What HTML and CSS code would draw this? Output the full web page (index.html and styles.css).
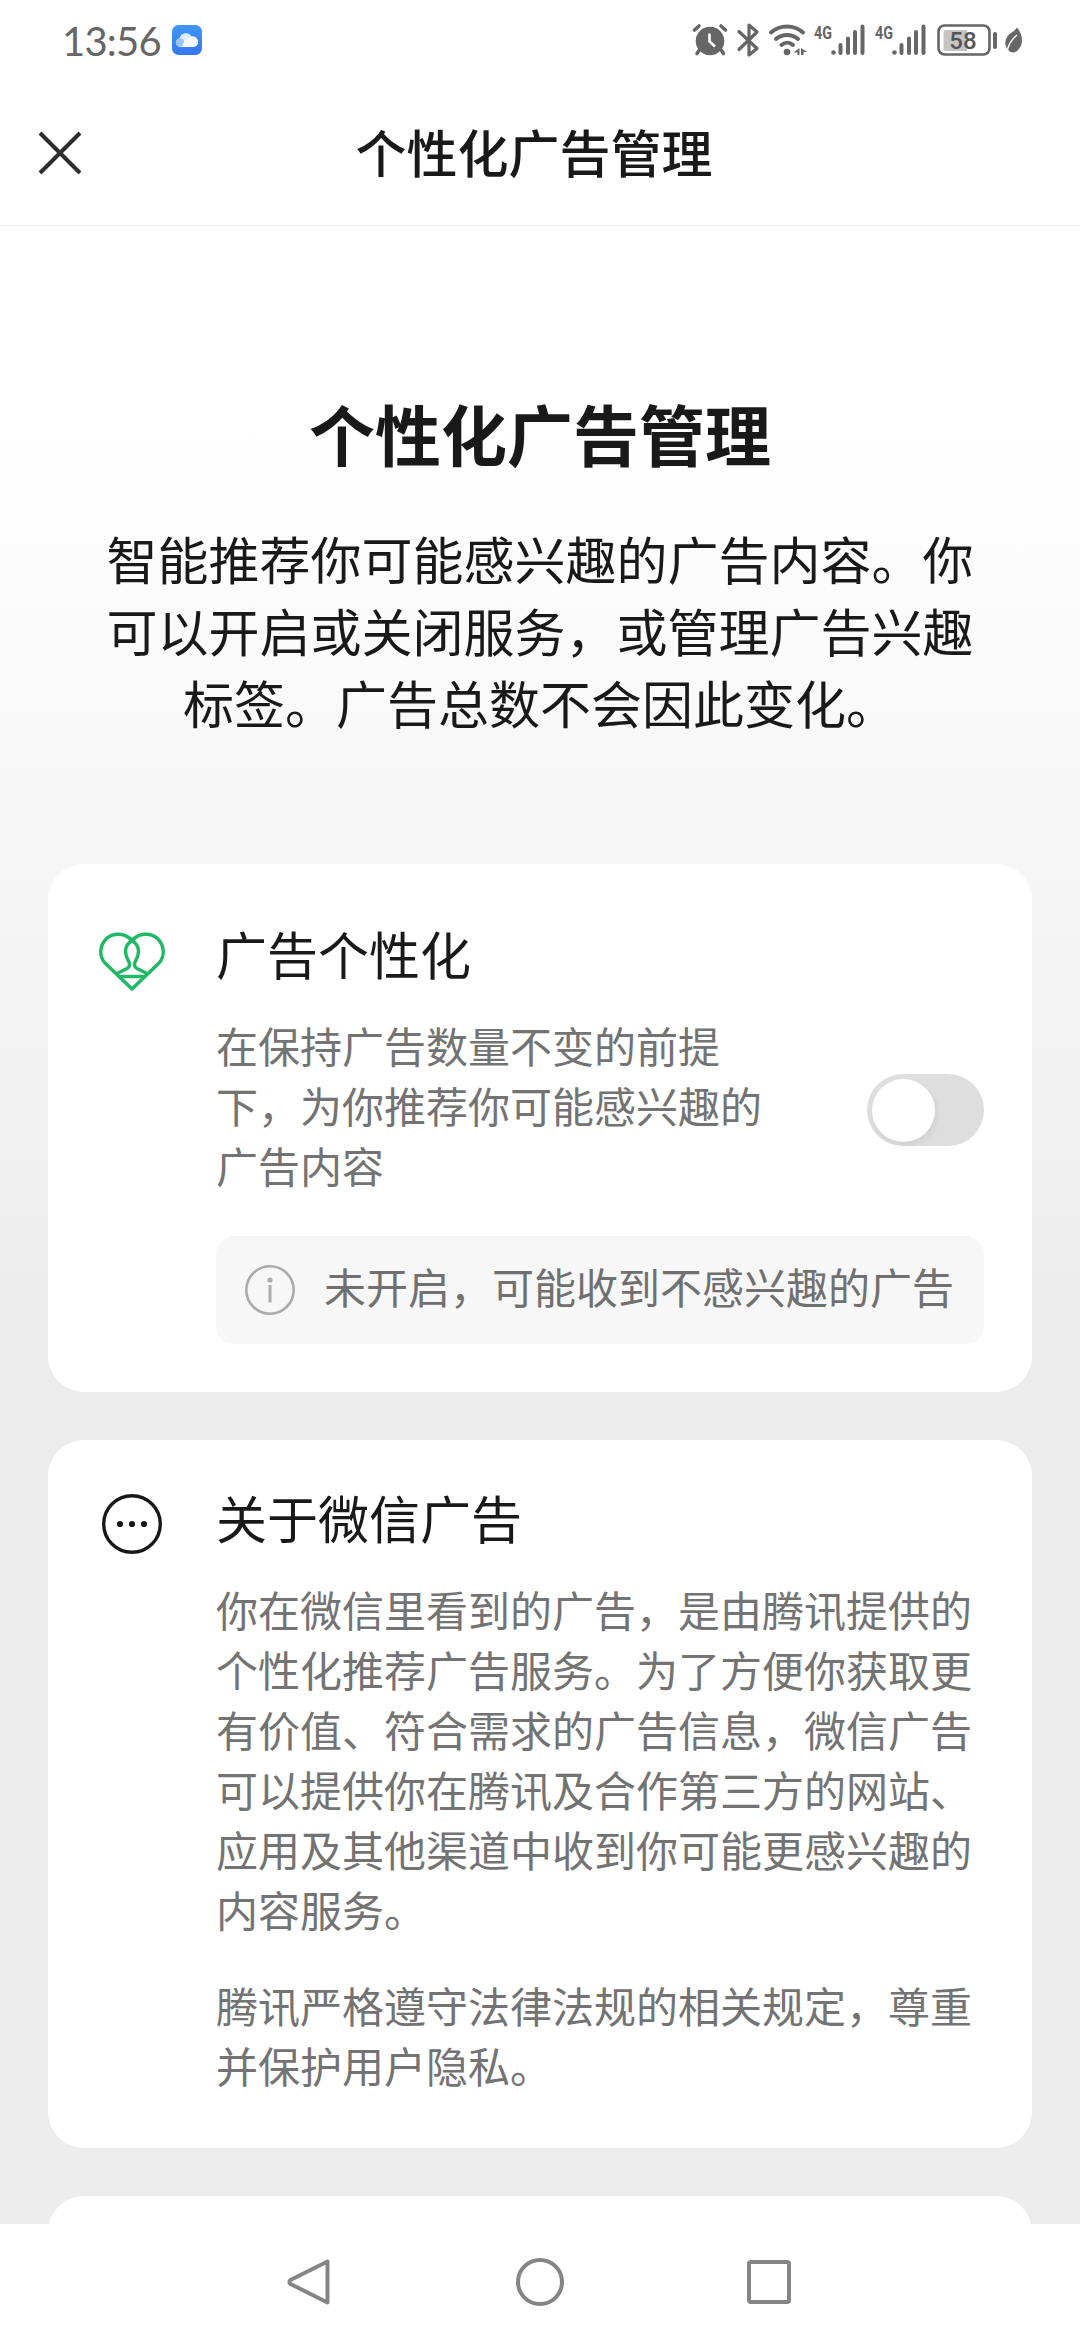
FILE: index.html
```html
<!DOCTYPE html>
<html lang="zh-CN">
<head>
<meta charset="utf-8">
<title>个性化广告管理</title>
<link rel="stylesheet" href="styles.css">
</head>
<body>
<div class="screen">
  <div class="status">
    <span class="time">13:56</span>
    <svg class="cloud" width="30" height="30" viewBox="0 0 30 30">
      <defs>
        <linearGradient id="sky" x1="0" y1="0" x2="0" y2="1"><stop offset="0" stop-color="#3f97f6"/><stop offset="1" stop-color="#3478ee"/></linearGradient>
        <linearGradient id="puff" x1="0" y1="0" x2="1" y2="1"><stop offset="0" stop-color="#cfe3fd"/><stop offset="1" stop-color="#fff"/></linearGradient>
      </defs>
      <rect width="30" height="30" rx="6.5" fill="url(#sky)"/>
      <path d="M8.500 22a4.500 4.500 0 0 1-1-8.800A6.500 6.500 0 0 1 19.500 11.500a5.500 5.500 0 0 1 6.500 5.500a5 5 0 0 1-5 5z" fill="url(#puff)"/>
      <circle cx="8" cy="17.500" r="4.300" fill="#9cc5fa"/>
      <path d="M10 22C11 17 14 13 19.500 11.500a5.500 5.500 0 0 1 6.500 5.500a5 5 0 0 1-5 5z" fill="#f5f9ff"/>
    </svg>
    <svg class="indicators" width="344" height="40" viewBox="690 20 344 40" fill="#666" stroke="none">
      <circle cx="710" cy="41" r="14.300"/>
      <path d="M694.500 30l4.500-4M721 26l4.500 4M699 50.500l-2 3M721.500 50.500l2 3" stroke="#666" stroke-width="3.600" stroke-linecap="round"/>
      <path d="M709.500 33.500v8l5.500 5" stroke="#fff" stroke-width="2.600" fill="none"/>
      <path d="M739 31.500l18 17l-8 6.500V25l8 7l-18 17.500" stroke="#666" stroke-width="3.200" fill="none" stroke-linejoin="round" stroke-linecap="round"/>
      <path d="M771 32.500c9-8 23-8 32 0M776 39c6-5.500 16-5.500 22 0M781.500 45c3.500-3 8-3 11.500 0" stroke="#666" stroke-width="4" fill="none" stroke-linecap="round"/>
      <circle cx="787" cy="52" r="3.300"/>
      <path d="M799.500 48v7h-2v-2.500h-4zM801 48l6 4h-3.500v3H801z"/>
      <g id="signal">
        <circle cx="833.500" cy="52.500" r="2.300"/>
        <path d="M840.500 45v8M848 38.500V53M855 32v21M862.500 26.500V53" stroke="#666" stroke-width="4" stroke-linecap="round"/>
        <text x="814" y="38.500" class="network" textLength="18" lengthAdjust="spacingAndGlyphs">4G</text>
      </g>
      <use href="#signal" x="61"/>
      <rect x="938.500" y="25.500" width="51" height="29" rx="6" fill="none" stroke="#666" stroke-width="2.600"/>
      <path d="M946 30h21v21h-21a2.500 2.500 0 0 1-2.500-2.500v-16a2.500 2.500 0 0 1 2.500-2.500z" fill="#c4c4c4"/>
      <text x="963" y="49" class="charge" text-anchor="middle">58</text>
      <path d="M995 34v13" stroke="#666" stroke-width="4" stroke-linecap="round"/>
      <path d="M1017 27.500c5 6 7.500 15 1.500 22c-2 2.500-4.500 3.500-8 2.500c-6-4-7-11-2-17c3-3 6.500-4 8.500-7.500z"/>
      <path d="M1017 35c-5 4-9 9-10 17.500" fill="none" stroke="#fff" stroke-width="1.500"/>
    </svg>
  </div>
  <header class="navbar">
    <svg class="close" width="48" height="48" viewBox="0 0 48 48"><path d="M4 4l40 40M44 4L4 44" stroke="#2e2e2e" stroke-width="4" fill="none"/></svg>
    <div class="navtitle">个性化广告管理</div>
  </header>
  <main class="page">
    <h1 class="headline">个性化广告管理</h1>
    <p class="intro">智能推荐你可能感兴趣的广告内容。你可以开启或关闭服务，或管理广告兴趣标签。广告总数不会因此变化。</p>
    <section class="card card-personal">
      <svg class="icon" width="72" height="72" viewBox="0 0 72 72" fill="none" stroke="#1fb864" stroke-width="3.400" stroke-linejoin="round">
        <path d="M36 14.500C29.500 7 17.500 6 10.500 12.500C3 20 3 31 9.500 37.500L36 63L62.500 37.500C69 31 69 20 61.500 12.500C54.500 6 42.500 7 36 14.500z"/>
        <path d="M21 47.500L31 42.500C33.500 41 34 38.500 33 36C32 33.500 29.500 31.500 29.500 25C29.500 19.500 32 17 36 14.500C40 17 42.500 19.500 42.500 25C42.500 31.500 40 33.500 39 36C38 38.500 38.500 41 41 42.500L51 47.500"/>
        <path d="M23.500 50.500h25"/>
      </svg>
      <div class="content">
        <h2 class="title">广告个性化</h2>
        <div class="setting">
          <p class="text">在保持广告数量不变的前提下，为你推荐你可能感兴趣的广告内容</p>
          <div class="switch"><div class="knob"></div></div>
        </div>
        <div class="notice">
          <svg width="60" height="60" viewBox="0 0 60 60"><circle cx="30" cy="30" r="23.700" fill="none" stroke="#ababab" stroke-width="2.600"/><circle cx="30" cy="20" r="2.600" fill="#ababab"/><path d="M30 25v17.500" stroke="#ababab" stroke-width="3"/></svg>
          <span>未开启，可能收到不感兴趣的广告</span>
        </div>
      </div>
    </section>
    <section class="card card-about">
      <svg class="icon" width="72" height="72" viewBox="0 0 72 72"><circle cx="36" cy="36" r="28.300" fill="none" stroke="#191919" stroke-width="3.400"/><g fill="#191919"><circle cx="24" cy="36" r="3.100"/><circle cx="36" cy="36" r="3.100"/><circle cx="48" cy="36" r="3.100"/></g></svg>
      <div class="content">
        <h2 class="title">关于微信广告</h2>
        <p class="text">你在微信里看到的广告，是由腾讯提供的个性化推荐广告服务。为了方便你获取更有价值、符合需求的广告信息，微信广告可以提供你在腾讯及合作第三方的网站、应用及其他渠道中收到你可能更感兴趣的内容服务。</p>
        <p class="text second">腾讯严格遵守法律法规的相关规定，尊重并保护用户隐私。</p>
      </div>
    </section>
    <section class="card card-next"></section>
  </main>
  <nav class="system">
    <svg width="1080" height="116" viewBox="0 0 1080 116" fill="none" stroke="#858585" stroke-width="4">
      <path d="M327.500 37.500v41L290.500 60q-2-2 0-4z" stroke-linejoin="round"/>
      <circle cx="540" cy="58" r="22"/>
      <rect x="749" y="38" width="40" height="40" rx="2"/>
    </svg>
  </nav>
</div>
</body>
</html>
```
FILE: styles.css
```css
* { box-sizing: border-box; margin: 0; padding: 0; }

body {
  font-family: "Noto Sans CJK SC", sans-serif;
  color: #191919;
  background: #fff;
}

.screen {
  width: 1080px;
  height: 2340px;
  overflow: hidden;
  display: flex;
  flex-direction: column;
}

.status {
  height: 80px;
  padding: 0 46px 0 62px;
  display: flex;
  align-items: center;
}

.time {
  width: 110px;
  padding-top: 2px;
  font: 400 40px/48px Lato, sans-serif;
  letter-spacing: -.8px;
  color: #666;
}

.indicators { margin-left: auto; }
.network { font: 700 19px Roboto, sans-serif; }
.charge { font: 500 24px Roboto, sans-serif; fill: #555; }

.navbar {
  height: 146px;
  border-bottom: 1px solid #f2f2f2;
  padding: 0 36px;
  display: grid;
  grid-template-columns: 48px 1fr 60px;
  align-items: center;
}

.navtitle {
  padding-bottom: 4px;
  text-align: center;
  font-size: 51px;
  line-height: 72px;
  font-weight: 500;
}

.page {
  height: 1998px;
  overflow: hidden;
  padding: 160px 48px 0;
  display: flex;
  flex-direction: column;
  background: linear-gradient(#fff 190px, #ededed 1080px);
}

.headline {
  text-align: center;
  font-size: 66px;
  line-height: 92px;
  font-weight: 700;
}

.intro {
  padding: 0 48px;
  margin: 44px 0 126px;
  font-size: 51px;
  line-height: 72px;
  text-align: center;
}

.card {
  flex: none;
  margin-bottom: 48px;
  padding: 0 48px;
  border-radius: 36px;
  background: #fff;
  display: grid;
  grid-template-columns: 72px 768px;
  column-gap: 48px;
  align-items: start;
}

.card-personal { height: 528px; padding-top: 53px; }
.card-about { height: 708px; padding-top: 41px; }
.card-next { height: 300px; }
.card-personal .icon { margin-top: 9px; }
.card-about .icon { margin-top: 7px; }

.title {
  font-size: 51px;
  line-height: 72px;
  font-weight: 400;
}

.text {
  margin-top: 26px;
  font-size: 42px;
  line-height: 60px;
  color: #737373;
}

.second { margin-top: 36px; }

.setting {
  display: flex;
  justify-content: space-between;
  align-items: center;
}

.setting .text { width: 560px; }

.switch {
  width: 117px;
  height: 72px;
  margin-top: 36px;
  padding: 4.5px;
  border-radius: 36px;
  background: #dedede;
}

.knob {
  width: 63px;
  height: 63px;
  border-radius: 50%;
  background: #fff;
  box-shadow: 2px 4px 6px rgba(0, 0, 0, .06);
}

.notice {
  height: 108px;
  margin-top: 41px;
  padding-left: 24px;
  border-radius: 18px;
  background: #f7f7f7;
  display: flex;
  align-items: center;
  gap: 24px;
  font-size: 42px;
  line-height: 60px;
  color: #707070;
}

.notice span { padding-bottom: 9px; }

.system { height: 116px; }
.system svg { display: block; }
```
